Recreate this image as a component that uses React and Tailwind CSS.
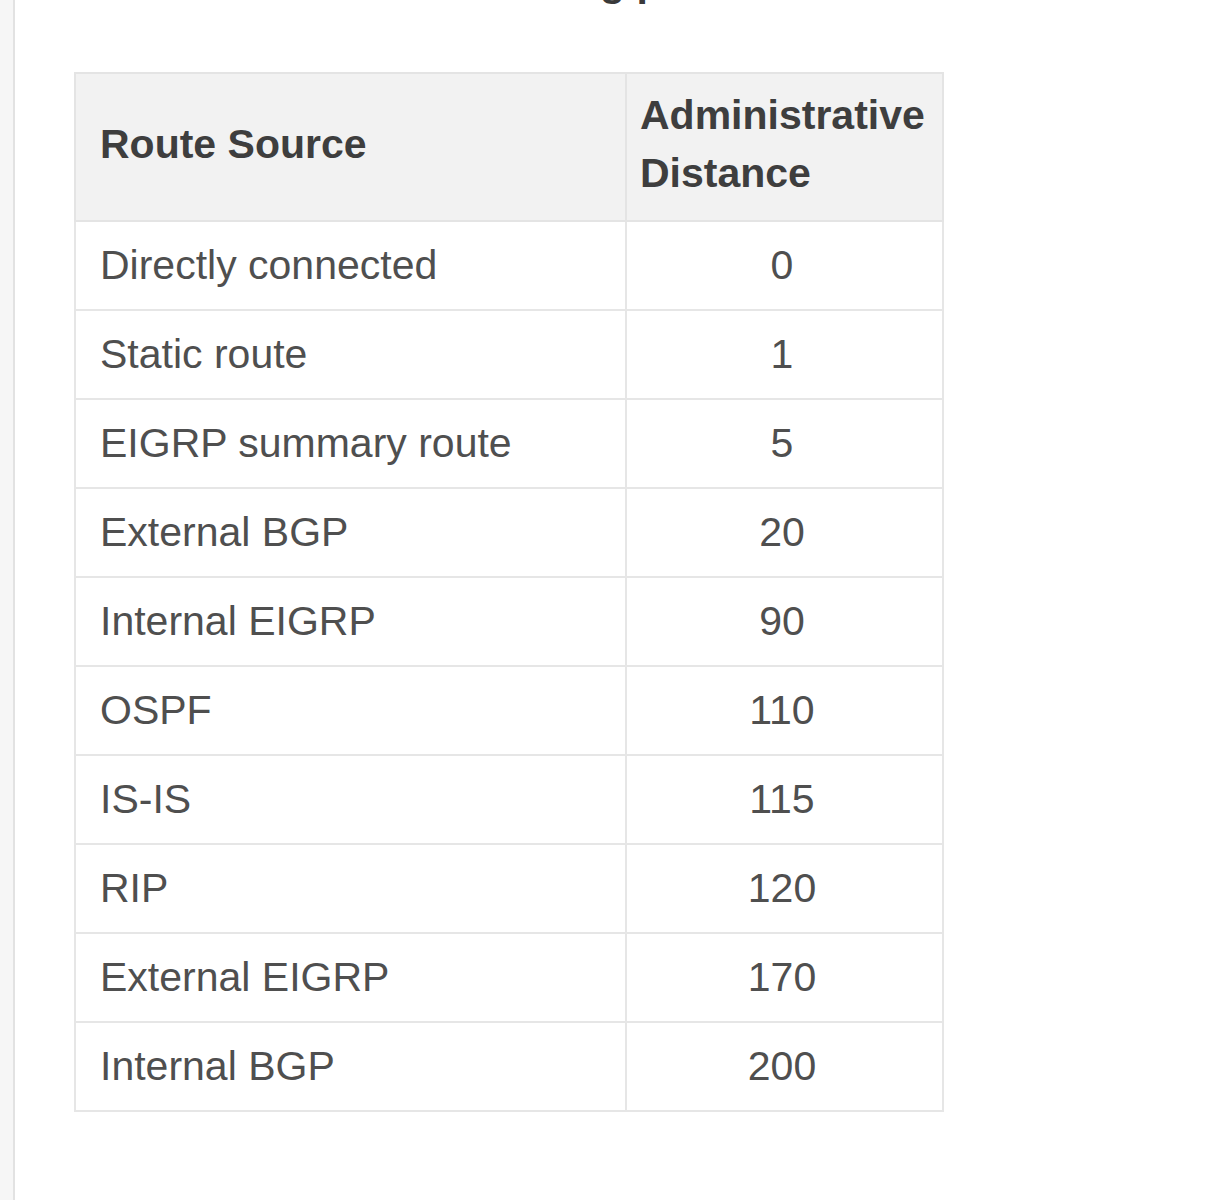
import React from "react";

const rows = [
  ["Directly connected", "0"],
  ["Static route", "1"],
  ["EIGRP summary route", "5"],
  ["External BGP", "20"],
  ["Internal EIGRP", "90"],
  ["OSPF", "110"],
  ["IS-IS", "115"],
  ["RIP", "120"],
  ["External EIGRP", "170"],
  ["Internal BGP", "200"],
];

export default function App() {
  return (
    <div
      className="flex min-h-screen bg-white text-[#4f4f4f]"
      style={{ fontFamily: '"Liberation Sans", Arial, sans-serif' }}
    >
      {/* side rail */}
      <div className="w-[15px] shrink-0 bg-[#f6f6f6] border-r-2 border-[#e2e2e2]" />

      <main className="flex-1 flex flex-col">
        {/* heading cut off at the top edge */}
        <div className="h-[6px] overflow-hidden">
          <p className="-mt-[39px] ml-[585px] text-[41px] leading-[42px] font-bold text-[#3a3a3a]">
            g p
          </p>
        </div>

        <div className="pl-[59px] pt-[66px]">
          <table className="table-fixed border-collapse w-[868px] border-2 border-[#e4e4e4]">
            <colgroup>
              <col className="w-[551px]" />
              <col className="w-[317px]" />
            </colgroup>
            <thead>
              <tr className="h-[148px] bg-[#f2f2f2]">
                <th className="border-2 border-[#e4e4e4] pl-[24px] pb-[6px] text-left align-middle text-[41px] leading-[58px] font-bold text-[#3e3e3e]">
                  Route Source
                </th>
                <th className="border-2 border-[#e4e4e4] pl-[13px] pr-0 pb-[6px] text-left align-middle text-[41px] leading-[58px] font-bold text-[#3e3e3e]">
                  Administrative Distance
                </th>
              </tr>
            </thead>
            <tbody>
              {rows.map(([src, ad]) => (
                <tr key={src} className="h-[89px]">
                  <td className="border-2 border-[#e6e6e6] pl-[24px] pb-[2px] align-middle text-[41px] leading-[58px]">
                    {src}
                  </td>
                  <td className="border-2 border-[#e6e6e6] pr-[5px] pb-[2px] text-center align-middle text-[41px] leading-[58px]">
                    {ad}
                  </td>
                </tr>
              ))}
            </tbody>
          </table>
        </div>
      </main>
    </div>
  );
}
